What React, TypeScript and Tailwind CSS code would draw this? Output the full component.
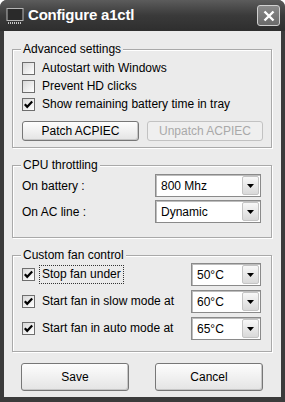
import type { ReactNode } from 'react'

const FONT = { fontFamily: '"Liberation Sans", Arial, sans-serif' }

function CheckBox({ checked }: { checked?: boolean }) {
  return (
    <span className="flex h-[13px] w-[13px] shrink-0 items-center justify-center border border-[#6e6e6e] bg-gradient-to-br from-[#d8d8d8] to-white">
      {checked && (
        <svg width="11" height="11" viewBox="0 0 11 11">
          <polyline points="1.8,5.2 4.2,7.8 9.2,2.6" fill="none" stroke="#000" strokeWidth="2.2" />
        </svg>
      )}
    </span>
  )
}

function Combo({ value, width }: { value: string; width: string }) {
  return (
    <div
      className={`flex h-[23px] ${width} items-center border border-[#8a8a8a] bg-white p-[1px] shadow-[inset_1px_1px_0_#bdbdbd]`}
    >
      <span className="flex-1 pl-[4px] text-[12px] text-black">{value}</span>
      <span className="flex h-full w-[17px] items-center justify-center rounded-[2px] border border-[#c4c4c4] bg-gradient-to-b from-[#f8f8f8] to-[#d9d9d9]">
        <svg width="7" height="4" viewBox="0 0 7 4">
          <polygon points="0,0 7,0 3.5,4" fill="#000" />
        </svg>
      </span>
    </div>
  )
}

function Group({ title, className, children }: { title: string; className: string; children: ReactNode }) {
  return (
    <div
      className={`relative ml-[8px] w-[260px] border border-[#a9a9a9] shadow-[inset_1px_1px_0_#fff,1px_1px_0_#fff] ${className}`}
    >
      <span className="absolute -top-[8px] left-[8px] bg-[#ebebeb] px-[2px] text-[12px] leading-[14px] text-black">
        {title}
      </span>
      {children}
    </div>
  )
}

function Button({ label, width, height, disabled }: { label: string; width: string; height: string; disabled?: boolean }) {
  return (
    <div
      className={`flex ${width} ${height} items-center justify-center rounded-[3px] border text-[12px] ${
        disabled
          ? 'border-[#c2c2c2] bg-[#efefef] text-[#a9a9a9]'
          : 'border-[#777] bg-gradient-to-b from-[#fdfdfd] to-[#e4e4e4] text-black shadow-[inset_-1px_-1px_0_#c6c6c6]'
      }`}
    >
      {label}
    </div>
  )
}

export default function App() {
  return (
    <div className="h-[402px] w-[285px] bg-white" style={FONT}>
      <div className="flex h-full w-full flex-col rounded-t-[7px] bg-[#3b3b3b]">
        <div className="flex h-[31px] shrink-0 items-center rounded-t-[7px] bg-gradient-to-b from-[#5c5c5c] via-[#3a3a3a] to-[#2e2e2e] pl-[6px] pr-[5px]">
          <svg width="18" height="18" viewBox="0 0 18 18" className="shrink-0">
            <rect x="1" y="1.5" width="16" height="12" fill="#2a2a2a" stroke="#b5b5b5" />
            <line x1="2" y1="16" x2="16" y2="16" stroke="#c8c8c8" strokeWidth="2" strokeDasharray="1 1" />
          </svg>
          <span className="ml-[4px] flex-1 text-[15px] font-bold tracking-[-0.2px] text-white">Configure a1ctl</span>
          <span className="flex h-[21px] w-[23px] items-center justify-center rounded-[3px] border border-[#d0d0d0] bg-gradient-to-b from-[#8a8a8a] to-[#6a6a6a]">
            <svg width="12" height="12" viewBox="0 0 12 12">
              <path d="M1.5 1.5 L10.5 10.5 M10.5 1.5 L1.5 10.5" stroke="#fff" strokeWidth="2.4" />
            </svg>
          </span>
        </div>

        <div className="mx-[4px] mb-[5px] flex flex-1 flex-col bg-[#ebebeb] pt-[18px]">
          <Group title="Advanced settings" className="h-[99px] pl-[9px] pt-[9px]">
            {[
              ['Autostart with Windows', false],
              ['Prevent HD clicks', false],
              ['Show remaining battery time in tray', true],
            ].map(([label, checked]) => (
              <div key={label as string} className="flex h-[18px] items-center gap-[7px] text-[12px] text-black">
                <CheckBox checked={checked as boolean} />
                <span>{label}</span>
              </div>
            ))}
            <div className="mt-[8px] flex gap-[8px]">
              <Button label="Patch ACPIEC" width="w-[117px]" height="h-[20px]" />
              <Button label="Unpatch ACPIEC" width="w-[116px]" height="h-[20px]" disabled />
            </div>
          </Group>

          <Group title="CPU throttling" className="mt-[17px] h-[73px] pl-[9px] pt-[8px]">
            <div className="flex h-[23px] items-center text-[12px] text-black">
              <span className="w-[133px]">On battery :</span>
              <Combo value="800 Mhz" width="w-[106px]" />
            </div>
            <div className="mt-[3px] flex h-[23px] items-center text-[12px] text-black">
              <span className="w-[133px]">On AC line :</span>
              <Combo value="Dynamic" width="w-[106px]" />
            </div>
          </Group>

          <Group title="Custom fan control" className="mt-[17px] h-[97px] pl-[9px] pt-[7px]">
            {[
              ['Stop fan under', '50°C', true],
              ['Start fan in slow mode at', '60°C', false],
              ['Start fan in auto mode at', '65°C', false],
            ].map(([label, value, focused], i) => (
              <div
                key={label as string}
                className={`flex h-[23px] items-center text-[12px] text-black ${i > 0 ? 'mt-[4px]' : ''}`}
              >
                <CheckBox checked />
                <span className="w-[156px] pl-[4px]">
                  <span className={`inline-block px-[2px] leading-[17px] ${focused ? 'border border-dotted border-[#333]' : 'border border-transparent'}`}>
                    {label}
                  </span>
                </span>
                <Combo value={value as string} width="w-[70px]" />
              </div>
            ))}
          </Group>

          <div className="mt-[11px] flex pl-[17px]">
            <Button label="Save" width="w-[108px]" height="h-[28px]" />
            <div className="w-[26px]" />
            <Button label="Cancel" width="w-[108px]" height="h-[28px]" />
          </div>
        </div>
      </div>
    </div>
  )
}
